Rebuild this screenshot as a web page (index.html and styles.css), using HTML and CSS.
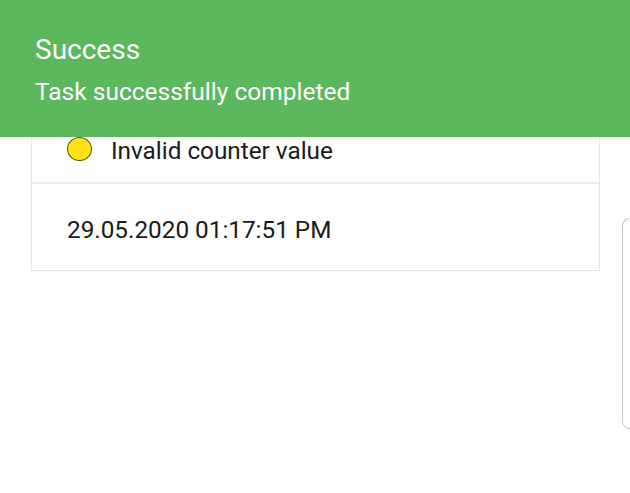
FILE: index.html
```html
<!DOCTYPE html>
<html>
<head>
<meta charset="utf-8">
<link rel="stylesheet" href="styles.css">
</head>
<body>
<div class="page">
  <div class="card">
    <div class="row status-row">
      <span class="dot"></span>
      <span class="status-text">Invalid counter value</span>
    </div>
    <div class="row date-row">29.05.2020 01:17:51 PM</div>
  </div>
  <div class="side-panel"></div>
</div>
<div class="toast">
  <div class="toast-title">Success</div>
  <div class="toast-msg">Task successfully completed</div>
</div>
</body>
</html>
```
FILE: styles.css
```css
html, body {
  margin: 0;
  padding: 0;
  background: #ffffff;
  width: 630px;
  height: 493px;
  overflow: hidden;
  font-family: Roboto, "Noto Sans", sans-serif;
}
.page {
  position: relative;
  padding-top: 100px;
}
.card {
  margin-left: 31px;
  width: 567px;
  border: 1px solid #e8e8e8;
  border-top: none;
}
.row {
  display: flex;
  align-items: center;
  color: #1a1a1a;
  font-size: 24.3px;
}
.status-row {
  height: 84px;
  padding-left: 35px;
  gap: 19px;
  border-bottom: 2px solid #ececec;
  box-sizing: border-box;
  padding-top: 19px;
}
.dot {
  width: 25px;
  height: 24px;
  margin-top: -3px;
  border-radius: 50%;
  background: #ffe31a;
  border: 1px solid #5a5016;
  box-sizing: border-box;
  flex: none;
}
.date-row {
  height: 86px;
  padding-left: 35px;
  padding-top: 5px;
  box-sizing: border-box;
}
.side-panel {
  position: absolute;
  left: 622px;
  top: 218px;
  width: 8px;
  height: 211px;
  border: 1px solid #c9c9c9;
  border-right: none;
  border-radius: 9px 0 0 9px;
  box-sizing: border-box;
}
.toast {
  position: absolute;
  left: 0;
  top: 0;
  width: 630px;
  height: 137px;
  background: #5cb85c;
  color: #ffffff;
  padding: 34px 35px 0;
  box-sizing: border-box;
}
.toast-title {
  font-size: 28px;
  line-height: 32px;
}
.toast-msg {
  font-size: 24.5px;
  line-height: 30px;
  margin-top: 11px;
}
```
